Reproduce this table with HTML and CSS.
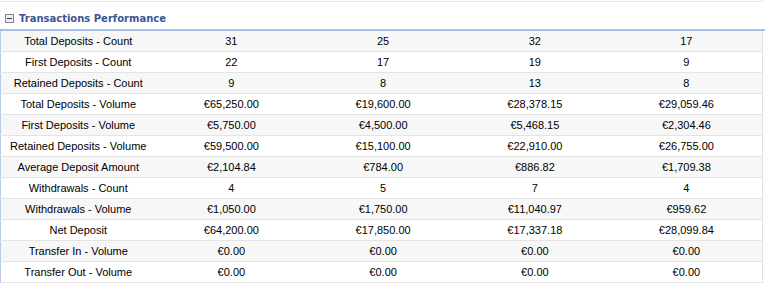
FILE: index.html
```html
<!DOCTYPE html>
<html lang="en">
<head>
    <meta charset="UTF-8">
    <title>Transactions Performance</title>
    <link rel="stylesheet" href="styles.css">
</head>
<body>
    <div class="top-box"></div>

    <div class="panel">
        <div class="panel-title">
            <span class="toggle"><span class="minus"></span></span>
            <span>Transactions Performance</span>
        </div>

        <table class="perf">
            <colgroup>
                <col class="label-col">
                <col><col><col><col>
            </colgroup>
            <tr><td>Total Deposits - Count</td><td>31</td><td>25</td><td>32</td><td>17</td></tr>
            <tr><td>First Deposits - Count</td><td>22</td><td>17</td><td>19</td><td>9</td></tr>
            <tr><td>Retained Deposits - Count</td><td>9</td><td>8</td><td>13</td><td>8</td></tr>
            <tr><td>Total Deposits - Volume</td><td>€65,250.00</td><td>€19,600.00</td><td>€28,378.15</td><td>€29,059.46</td></tr>
            <tr><td>First Deposits - Volume</td><td>€5,750.00</td><td>€4,500.00</td><td>€5,468.15</td><td>€2,304.46</td></tr>
            <tr><td>Retained Deposits - Volume</td><td>€59,500.00</td><td>€15,100.00</td><td>€22,910.00</td><td>€26,755.00</td></tr>
            <tr><td>Average Deposit Amount</td><td>€2,104.84</td><td>€784.00</td><td>€886.82</td><td>€1,709.38</td></tr>
            <tr><td>Withdrawals - Count</td><td>4</td><td>5</td><td>7</td><td>4</td></tr>
            <tr><td>Withdrawals - Volume</td><td>€1,050.00</td><td>€1,750.00</td><td>€11,040.97</td><td>€959.62</td></tr>
            <tr><td>Net Deposit</td><td>€64,200.00</td><td>€17,850.00</td><td>€17,337.18</td><td>€28,099.84</td></tr>
            <tr><td>Transfer In - Volume</td><td>€0.00</td><td>€0.00</td><td>€0.00</td><td>€0.00</td></tr>
            <tr><td>Transfer Out - Volume</td><td>€0.00</td><td>€0.00</td><td>€0.00</td><td>€0.00</td></tr>
        </table>
    </div>
</body>
</html>
```

FILE: styles.css
```css
body {
    margin: 0;
    background: #fff;
    font-family: "Liberation Sans", Arial, sans-serif;
    font-size: 11px;
    color: #000;
}
.top-box {
    width: 762px;
    height: 1px;
    border-bottom: 1px solid #e6e6e6;
    border-right: 1px solid #e6e6e6;
}
.panel {
    width: 765px;
}
.panel-title {
    display: flex;
    align-items: center;
    box-sizing: border-box;
    height: 29px;
    padding: 5px 0 0 5px;
    border-bottom: 2px solid #a4bfe8;
    font-family: "DejaVu Sans", Verdana, sans-serif;
    font-size: 10px;
    font-weight: bold;
    color: #3b5693;
}
.toggle {
    width: 7px;
    height: 7px;
    border: 1px solid #7d8592;
    background: #eef0f4;
    margin-right: 5px;
    display: flex;
    align-items: center;
    justify-content: center;
}
.minus {
    width: 5px;
    height: 1px;
    background: #2c3445;
}
.perf {
    width: 763px;
    border-collapse: collapse;
    table-layout: fixed;
    border-left: 1px solid #b9cbe8;
}
.label-col {
    width: 155px;
}
.perf td {
    height: 20px;
    padding: 0;
    text-align: center;
    border-bottom: 1px solid #e4e4e4;
    line-height: 20px;
    white-space: nowrap;
}
.perf td:last-child {
    border-right: 1px solid #e0e0e0;
}
.perf tr:nth-child(odd) td {
    background: #f7f7f7;
}
```
